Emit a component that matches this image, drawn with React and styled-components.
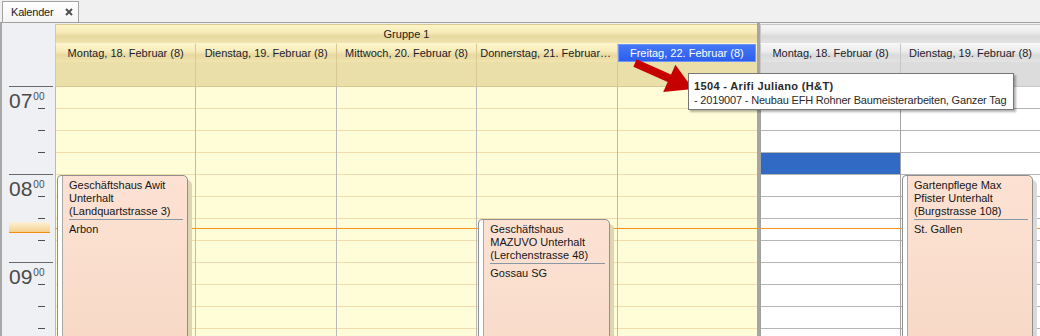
import styled, { createGlobalStyle } from "styled-components";

const Global = createGlobalStyle`
  html, body {
    margin: 0;
    padding: 0;
  }
  body {
    background: #f0f0f0;
    font-family: "Liberation Sans", Arial, sans-serif;
    font-size: 11px;
    color: #1b1b1b;
    overflow: hidden;
  }
`;

const SLOT = 22;
const ROWS = 12;
const NOW = 142;

const tones = {
  yellow: {
    head: "linear-gradient(#fdf5c9 0%, #f7ebb9 40%, #e8d8a0 62%, #f1e4af 100%)",
    headLine: "#d8ca92",
    allDay: "#ebdfa9",
    body: "#fffdd8",
    line: "#f2dcab",
    colLine: "#bababa",
    shade: "#dcd7b2",
  },
  gray: {
    head: "linear-gradient(#f6f6f6 0%, #ececec 40%, #dadada 62%, #e3e3e3 100%)",
    headLine: "#c6c6c6",
    allDay: "#dcdcdc",
    body: "#ffffff",
    line: "#b4b4b4",
    colLine: "#a2a2a2",
    shade: "#d9d9d9",
  },
};

const groups = [
  {
    tone: "yellow",
    title: "Gruppe 1",
    width: 702,
    days: [
      {
        label: "Montag, 18. Februar (8)",
        events: [
          {
            slot: 4,
            lines: ["Geschäftshaus Awit", "Unterhalt", "(Landquartstrasse 3)"],
            place: "Arbon",
          },
        ],
      },
      { label: "Dienstag, 19. Februar (8)" },
      { label: "Mittwoch, 20. Februar (8)" },
      {
        label: "Donnerstag, 21. Februar (8)",
        events: [
          {
            slot: 6,
            lines: ["Geschäftshaus", "MAZUVO Unterhalt", "(Lerchenstrasse 48)"],
            place: "Gossau SG",
          },
        ],
      },
      { label: "Freitag, 22. Februar (8)", selected: true },
    ],
  },
  {
    tone: "gray",
    title: "",
    width: 280,
    days: [
      { label: "Montag, 18. Februar (8)", activeSlot: 3 },
      {
        label: "Dienstag, 19. Februar (8)",
        events: [
          {
            slot: 4,
            lines: ["Gartenpflege Max", "Pfister Unterhalt", "(Burgstrasse 108)"],
            place: "St. Gallen",
          },
        ],
      },
    ],
  },
];

const hours = ["07", "08", "09"];

export default function App() {
  return (
    <Window>
      <Global />
      <TabStrip>
        <Tab>
          Kalender
          <svg width="8" height="8" viewBox="0 0 8 8">
            <path d="M1 1 L7 7 M7 1 L1 7" stroke="#505050" strokeWidth="2" />
          </svg>
        </Tab>
      </TabStrip>
      <Calendar>
        <TimeColumn>
          <TimeHead />
          {hours.map((h) => (
            <Hour key={h}>
              <HourLabel>
                {h}
                <Minutes>00</Minutes>
              </HourLabel>
              <Tick />
              <Tick />
              <Tick />
            </Hour>
          ))}
          <HourEnd />
          <NowMarker />
        </TimeColumn>
        {groups.map((g, gi) => (
          <Board key={gi}>
            {gi > 0 && <GroupSep />}
            <Group $width={g.width}>
              <GroupTitle $tone={g.tone}>{g.title}</GroupTitle>
              <Columns>
                {g.days.map((d, di) => (
                  <DayColumn key={di}>
                    <DayHead $tone={g.tone}>
                      <DayName $selected={d.selected}>{d.label}</DayName>
                    </DayHead>
                    <AllDay $tone={g.tone} />
                    <Slots $tone={g.tone}>
                      {Array.from({ length: ROWS }).map((_, i) => (
                        <Slot key={i} $tone={g.tone} $active={d.activeSlot === i} />
                      ))}
                      <NowLine />
                      {(d.events || []).map((e, ei) => (
                        <Event key={ei} $tone={g.tone} style={{ top: e.slot * SLOT }}>
                          {e.lines.map((l) => (
                            <EventLine key={l}>{l}</EventLine>
                          ))}
                          <EventRule />
                          <EventLine>{e.place}</EventLine>
                        </Event>
                      ))}
                    </Slots>
                  </DayColumn>
                ))}
              </Columns>
            </Group>
          </Board>
        ))}
      </Calendar>

      <Arrow width="70" height="50" viewBox="0 0 70 50">
        <line x1="5" y1="8" x2="41" y2="24" stroke="#c60000" strokeWidth="8" />
        <polygon points="63,34 33.2,37.1 45.4,9.7" fill="#c60000" />
      </Arrow>
      <Tooltip>
        <TipTitle>1504 - Arifi Juliano (H&amp;T)</TipTitle>
        <TipText>- 2019007 - Neubau EFH Rohner Baumeisterarbeiten, Ganzer Tag</TipText>
      </Tooltip>
    </Window>
  );
}

const Window = styled.div`
  position: relative;
  width: 1040px;
  height: 336px;
  overflow: hidden;
  display: flex;
  flex-direction: column;
`;

const TabStrip = styled.div`
  height: 22px;
  flex-shrink: 0;
  border-bottom: 1px solid #a0a0a0;
  display: flex;
  align-items: flex-end;
  padding-left: 2px;
`;

const Tab = styled.div`
  width: 77px;
  height: 21px;
  box-sizing: border-box;
  border: 1px solid #a3a3a3;
  border-bottom: none;
  background: linear-gradient(#ffffff, #f4f4f4);
  display: flex;
  align-items: center;
  justify-content: space-between;
  padding: 0 5px 1px 8px;
  color: #222;
  letter-spacing: -0.2px;
`;

const Calendar = styled.div`
  flex: 1;
  min-height: 0;
  display: flex;
  border-left: 2px solid #a8a8a8;
  overflow: hidden;
`;

const TimeColumn = styled.div`
  position: relative;
  width: 53px;
  flex-shrink: 0;
  background: #eef0f3;
  display: flex;
  flex-direction: column;
  color: #4a4a4a;
`;

const TimeHead = styled.div`
  height: 63px;
  flex-shrink: 0;
`;

const Hour = styled.div`
  flex-shrink: 0;
  width: 44px;
  margin-left: 7px;
  border-top: 1px solid #6a6a6a;
  display: flex;
  flex-direction: column;
`;

const HourEnd = styled(Hour)`
  height: 20px;
`;

const HourLabel = styled.div`
  height: 21px;
  display: flex;
  align-items: flex-start;
  font-size: 21px;
  line-height: 21px;
  padding-top: 3px;
  box-sizing: border-box;
  overflow: visible;
  white-space: nowrap;
`;

const Minutes = styled.span`
  font-size: 10px;
  line-height: 10px;
  margin: 2px 0 0 1px;
`;

const Tick = styled.div`
  height: 22px;
  width: 7px;
  margin-left: 29px;
  flex-shrink: 0;
  box-sizing: border-box;
  border-top: 1px solid #4e4e4e;
`;

const NowMarker = styled.div`
  position: absolute;
  left: 7px;
  top: 199px;
  width: 41px;
  height: 10px;
  background: linear-gradient(#fdf1d6, #f6d08f);
  border-bottom: 1px solid #f08c10;
`;

const Board = styled.div`
  display: flex;
  flex-shrink: 0;
`;

const GroupSep = styled.div`
  width: 3px;
  background: #a5a5a5;
`;

const Group = styled.div`
  width: ${(p) => p.$width}px;
  display: flex;
  flex-direction: column;
  padding-top: 1px;
`;

const GroupTitle = styled.div`
  height: 19px;
  box-sizing: border-box;
  border-top: 1px solid ${(p) => tones[p.$tone].headLine};
  border-left: 1px solid ${(p) => tones[p.$tone].headLine};
  background: ${(p) => tones[p.$tone].head};
  text-align: center;
  line-height: 18px;
  color: #1d1d1d;
`;

const Columns = styled.div`
  flex: 1;
  display: flex;
  min-height: 0;
`;

const DayColumn = styled.div`
  flex: 1;
  min-width: 0;
  display: flex;
  flex-direction: column;
`;

const DayHead = styled.div`
  height: 19px;
  box-sizing: border-box;
  border-top: 1px solid ${(p) => (p.$tone === "yellow" ? "#fbf4d2" : "#f8f8f8")};
  border-left: 1px solid ${(p) => tones[p.$tone].headLine};
  background: ${(p) => tones[p.$tone].head};
  display: flex;
`;

const DayName = styled.div`
  flex: 1;
  min-width: 0;
  margin: ${(p) => (p.$selected ? "0 1px 0 0" : "0")};
  padding: 0 3px;
  text-align: center;
  line-height: 18px;
  white-space: nowrap;
  overflow: hidden;
  text-overflow: ellipsis;
  color: ${(p) => (p.$selected ? "#ffffff" : "#1c1c2c")};
  background: ${(p) => (p.$selected ? "linear-gradient(#4679f7, #2b5cee)" : "none")};
  box-shadow: ${(p) => (p.$selected ? "inset 0 0 0 1px #6f96fb" : "none")};
`;

const AllDay = styled.div`
  height: 24px;
  box-sizing: border-box;
  border-left: 1px solid ${(p) => tones[p.$tone].headLine};
  background: ${(p) => tones[p.$tone].allDay};
`;

const Slots = styled.div`
  position: relative;
  flex: 1;
  min-height: 0;
  border-left: 1px solid ${(p) => tones[p.$tone].colLine};
  border-top: 1px solid ${(p) => tones[p.$tone].headLine};
  background: ${(p) => tones[p.$tone].body};
  display: flex;
  flex-direction: column;
`;

const Slot = styled.div`
  height: ${SLOT}px;
  flex-shrink: 0;
  box-sizing: border-box;
  border-bottom: 1px solid ${(p) => tones[p.$tone].line};
  background: ${(p) => (p.$active ? "#316ac5" : "transparent")};
`;

const NowLine = styled.div`
  position: absolute;
  left: -1px;
  right: 0;
  top: ${NOW - 1}px;
  height: 1px;
  background: #f7941d;
`;

const Event = styled.div`
  position: absolute;
  left: 1px;
  right: 7px;
  height: 260px;
  z-index: 2;
  box-sizing: border-box;
  border: 1px solid #8f8f8f;
  border-radius: 4px 5px 0 0;
  background: linear-gradient(to right, #ffffff 0 4px, #a9a9a9 4px 5px, transparent 5px),
    linear-gradient(#fde2d4, #f3d4be);
  box-shadow: 4px 5px 0 ${(p) => tones[p.$tone].shade};
  padding: 3px 4px 0 11px;
  color: #161616;
  line-height: 13px;
`;

const EventLine = styled.div`
  white-space: nowrap;
  overflow: hidden;
`;

const EventRule = styled.div`
  height: 1px;
  background: #8896a6;
  margin: 1px 0 3px;
`;

const Arrow = styled.svg`
  position: absolute;
  left: 630px;
  top: 55px;
  z-index: 5;
`;

const Tooltip = styled.div`
  position: absolute;
  left: 688px;
  top: 73px;
  width: 326px;
  height: 37px;
  box-sizing: border-box;
  z-index: 6;
  background: #ffffff;
  border: 1px solid #767676;
  box-shadow: 2px 2px 2px rgba(0, 0, 0, 0.3);
  padding: 5px 5px 0;
  line-height: 14px;
  color: #2a2a2a;
  white-space: nowrap;
`;

const TipTitle = styled.div`
  font-weight: bold;
  letter-spacing: 0.35px;
`;

const TipText = styled.div`
  letter-spacing: -0.18px;
`;
